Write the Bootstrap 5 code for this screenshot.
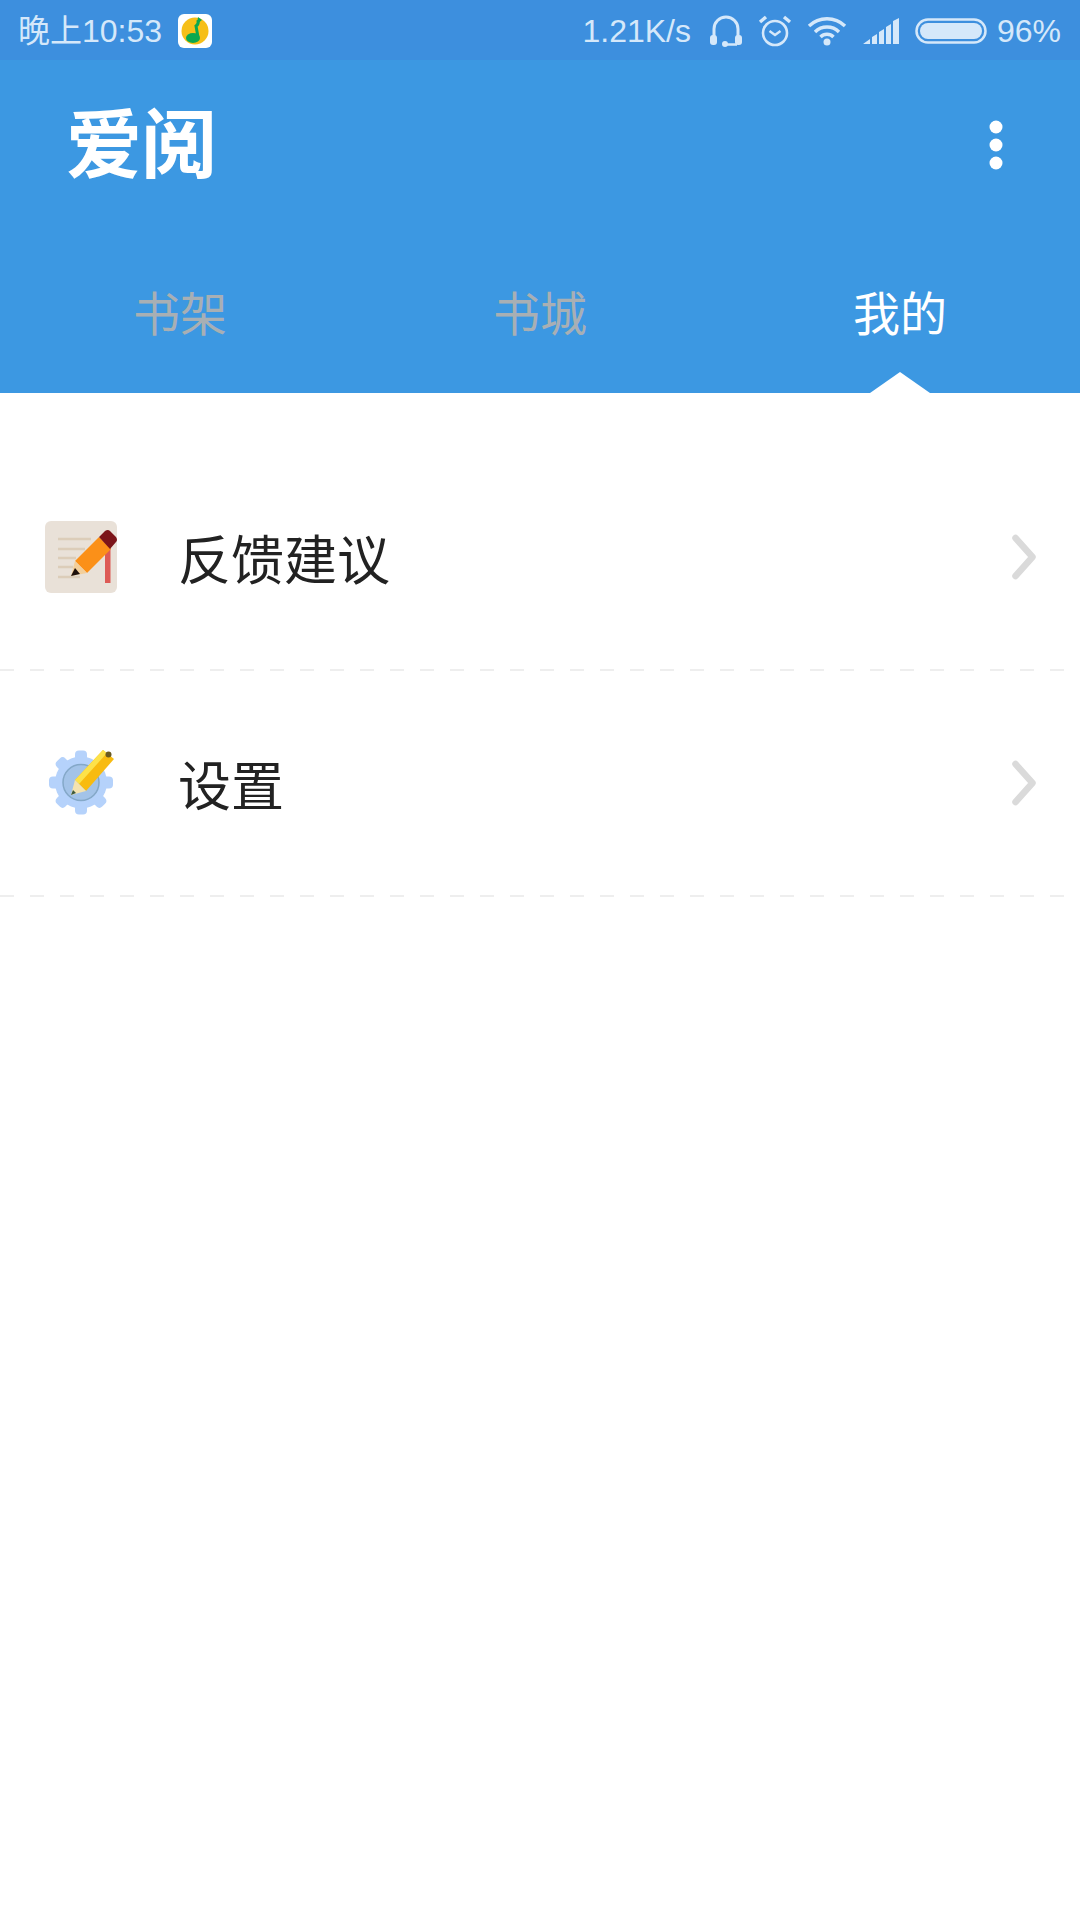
<!DOCTYPE html>
<html lang="zh">
<head>
<meta charset="utf-8">
<title>爱阅</title>
<link href="https://cdn.jsdelivr.net/npm/bootstrap@5.3.0/dist/css/bootstrap.min.css" rel="stylesheet">
<style>
html,body{background:#fff;font-family:"Noto Sans CJK SC","Noto Sans",sans-serif}
.phone-status{height:60px;background:#3d8fde;color:#d5e8fa;font-size:32px;font-family:"Liberation Sans","Noto Sans CJK SC",sans-serif;padding:2px 19px 0 18px}
.phone-status svg{display:block;flex:none}
.gap-a{margin-left:18px}
.gap-b{margin-left:15px}
.gap-c{margin-left:16px}
.gap-d{margin-left:10px}
.app-head{height:333px;background:#3c98e2;color:#fff}
.brand-row{height:172px;padding:0 77px 2px 66px}
.brand-text{font-size:76px;line-height:1;font-weight:700;letter-spacing:-1px;color:#fff;margin-bottom:12px}
.tab-cell{height:161px;padding-bottom:59px;font-size:47px;color:#a8afb4;line-height:1;font-weight:400}
.tab-cell.is-on{color:#fff}
.tab-notch{position:absolute;bottom:0;left:50%;margin-left:-30px;width:60px;height:21px;background:#fff;clip-path:polygon(50% 0,100% 100%,0 100%)}
.menu-list{margin-top:52px}
.menu-row{height:226px;padding:0 45px 2px 45px;background:#fff;border:0;border-radius:0;color:#222;font-size:53px;line-height:1;gap:61px;background-image:repeating-linear-gradient(90deg,#eeeeee 0 14px,transparent 14px 30px);background-size:1064px 2px;background-repeat:no-repeat;background-position:0 100%}
.menu-row svg{flex:none}
.menu-row .row-arrow{margin-left:auto;margin-right:-1px}
</style>
</head>
<body class="m-0">
<div class="phone-status d-flex align-items-center">
  <span>晚上10:53</span>
  <svg class="ms-3" width="34" height="34" viewBox="0 0 34 34"><rect width="34" height="34" rx="6" fill="#fff"/><circle cx="17" cy="17" r="13.500" fill="#f6bf17"/><path d="M20 6 Q21 10 18 12 L20 23" fill="none" stroke="#0aa84f" stroke-width="3"/><path d="M20 3l4 3-5 4z" fill="#0aa84f"/><ellipse cx="15" cy="24" rx="7" ry="5" fill="#0aa84f"/></svg>
  <span class="ms-auto">1.21K/s</span>
  <svg class="gap-a" width="34" height="32" viewBox="0 0 34 32"><path d="M5 24V14a12 12 0 0 1 24 0v10" fill="none" stroke="#d5e8fa" stroke-width="3"/><rect x="1" y="20" width="7" height="10" rx="3" fill="#d5e8fa"/><rect x="26" y="20" width="7" height="10" rx="3" fill="#d5e8fa"/><path d="M14 29.500h14" stroke="#d5e8fa" stroke-width="2.500"/><circle cx="16" cy="29" r="3" fill="#d5e8fa"/></svg>
  <svg class="gap-b" width="34" height="34" viewBox="0 0 34 34"><circle cx="17" cy="19" r="12" fill="none" stroke="#d5e8fa" stroke-width="2.600"/><path d="M11.500 17l5.500 4 5.500-4" fill="none" stroke="#d5e8fa" stroke-width="2.400"/><path d="M2 8l6-5M32 8l-6-5" stroke="#d5e8fa" stroke-width="3.400"/></svg>
  <svg class="gap-b" width="40" height="30" viewBox="0 0 40 30"><path d="M2 10a26 26 0 0 1 36 0M8 16a17 17 0 0 1 24 0M13.500 21a9 9 0 0 1 13 0" fill="none" stroke="#d5e8fa" stroke-width="3.400"/><circle cx="20" cy="26" r="3.500" fill="#d5e8fa"/></svg>
  <svg class="gap-c" width="37" height="26" viewBox="0 0 37 26"><path d="M0 26l7-5v5zM9 26v-7l5-3v10zM16 26V14l5-3v15zM23 26V9l5-3v20zM30 26V3l6-3v26z" fill="#d5e8fa"/></svg>
  <svg class="gap-b" width="72" height="26" viewBox="0 0 72 26"><rect x="1.500" y="1.500" width="69" height="23" rx="11.500" fill="none" stroke="#d5e8fa" stroke-width="2.500"/><rect x="5" y="5" width="62" height="16" rx="8" fill="#d5e8fa"/></svg>
  <span class="gap-d">96%</span>
</div>

<header class="app-head">
  <div class="brand-row d-flex align-items-center justify-content-between">
    <span class="brand-text">爱阅</span>
    <svg width="14" height="50" viewBox="0 0 14 50"><circle cx="7" cy="7" r="6.500" fill="#fff"/><circle cx="7" cy="25" r="6.500" fill="#fff"/><circle cx="7" cy="43" r="6.500" fill="#fff"/></svg>
  </div>
  <div class="row g-0">
    <div class="col-4 tab-cell d-flex align-items-end justify-content-center">书架</div>
    <div class="col-4 tab-cell d-flex align-items-end justify-content-center">书城</div>
    <div class="col-4 tab-cell is-on d-flex align-items-end justify-content-center position-relative">我的<span class="tab-notch"></span></div>
  </div>
</header>

<main class="list-group list-group-flush menu-list">
  <a class="list-group-item menu-row d-flex align-items-center text-decoration-none" href="#">
    <svg width="72" height="72" viewBox="0 0 72 72">
      <rect width="72" height="72" rx="6" fill="#e9e1d8"/>
      <path d="M13 18h33M13 28h27M13 37h18M13 46h15M13 56h22" stroke="#dccdb9" stroke-width="2.500"/>
      <rect x="60" y="27" width="5.500" height="35" fill="#dd5a55"/>
      <path d="M30 40L42 52 66 28 54 16z" fill="#fb9018"/>
      <path d="M30 40L42 52 26 55z" fill="#f3cf9b"/>
      <path d="M30 47L35 53 26 55z" fill="#1d0f0a"/>
      <path d="M54 16l6-6q3-2 5 0l6 6q2 3 0 5l-6 7z" fill="#7c1519"/>
    </svg>
    <span>反馈建议</span>
    <svg class="row-arrow" width="24" height="46" viewBox="0 0 24 46"><path d="M3.500 4l17 19-17 19" fill="none" stroke="#dadada" stroke-width="6.500" stroke-linecap="round" stroke-linejoin="round"/></svg>
  </a>
  <a class="list-group-item menu-row d-flex align-items-center text-decoration-none" href="#">
    <svg width="72" height="72" viewBox="0 0 72 72">
      <g fill="#b5d2fb">
        <circle cx="36" cy="35.500" r="26"/>
        <rect x="30" y="3.500" width="12" height="64" rx="4"/>
        <rect x="4" y="29.500" width="64" height="12" rx="4"/>
        <rect x="30" y="3.500" width="12" height="64" rx="4" transform="rotate(45 36 35.500)"/>
        <rect x="30" y="3.500" width="12" height="64" rx="4" transform="rotate(-45 36 35.500)"/>
      </g>
      <circle cx="36" cy="35.500" r="18" fill="#a3c3e8" stroke="#84a8c8" stroke-width="1.500"/>
      <path d="M30 33L41 44 69 12 58 3z" fill="#f8bb10"/>
      <path d="M30 33L58 3 62 6 34 37z" fill="#fde24a"/>
      <path d="M30 33l11 11-15 4z" fill="#f4e3b0"/>
      <path d="M28 43l3 3-5 2z" fill="#3c5a3c"/>
      <circle cx="63.500" cy="7.500" r="3" fill="#6a5a20"/>
    </svg>
    <span>设置</span>
    <svg class="row-arrow" width="24" height="46" viewBox="0 0 24 46"><path d="M3.500 4l17 19-17 19" fill="none" stroke="#dadada" stroke-width="6.500" stroke-linecap="round" stroke-linejoin="round"/></svg>
  </a>
</main>
<script src="https://cdn.jsdelivr.net/npm/bootstrap@5.3.0/dist/js/bootstrap.bundle.min.js"></script>
</body>
</html>
